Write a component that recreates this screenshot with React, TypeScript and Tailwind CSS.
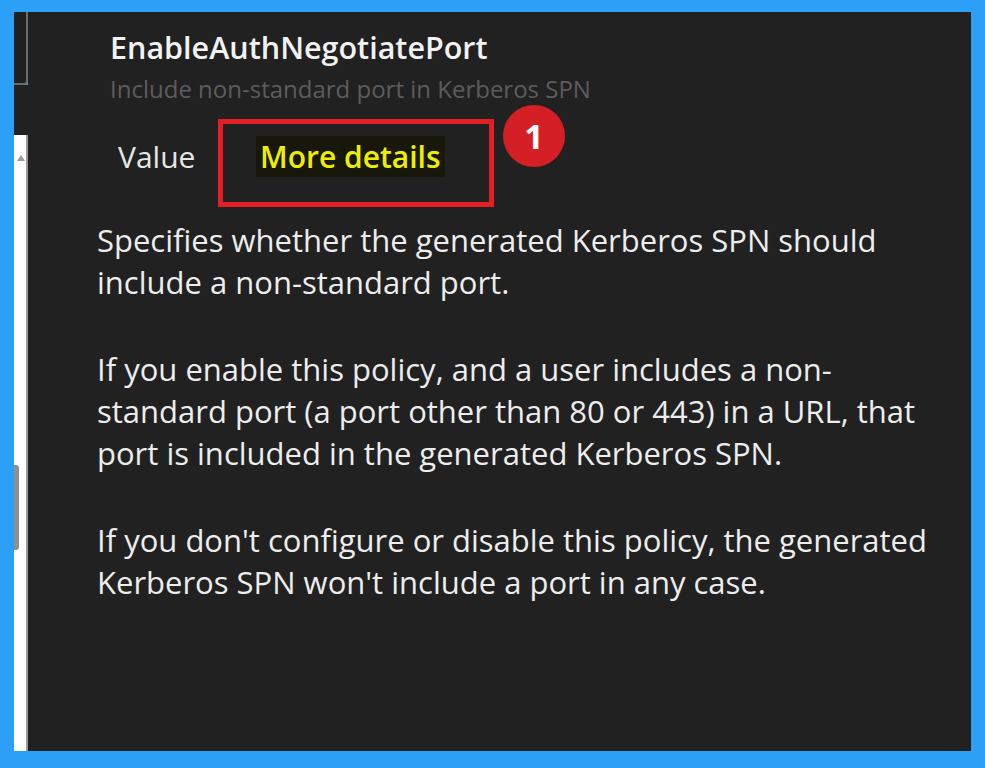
const body = [
  [
    "Specifies whether the generated Kerberos SPN should",
    "include a non-standard port.",
  ],
  [
    "If you enable this policy, and a user includes a non-",
    "standard port (a port other than 80 or 443) in a URL, that",
    "port is included in the generated Kerberos SPN.",
  ],
  [
    "If you don't configure or disable this policy, the generated",
    "Kerberos SPN won't include a port in any case.",
  ],
];

export default function App() {
  return (
    <div
      className="flex h-[768px] w-[985px] bg-[#2ba0f6] pb-[17px] pl-[14px] pr-[14px] pt-[12px]"
      style={{ fontFamily: '"Open Sans", "Noto Sans", sans-serif' }}
    >
      {/* left edge of the neighbouring pane */}
      <div className="flex w-[14px] flex-col">
        <div className="h-[73px] rounded-br-[4px] border-b-2 border-r-2 border-[#6b6b6b] bg-[#202020]" />
        <div className="h-[50px] bg-[#212121]" />
        <div className="relative flex-1 border-r-2 border-[#9a9a9a] bg-white">
          <div className="absolute left-[3px] top-[20px] h-0 w-0 border-b-[6px] border-l-[4px] border-r-[4px] border-b-[#9b9b9b] border-l-transparent border-r-transparent" />
          <div className="absolute left-0 top-[330px] h-[85px] w-[5px] rounded-r-[3px] bg-[#8f8f8f]" />
        </div>
      </div>

      <div className="flex-1 bg-[#212121] text-white">
        <div className="pl-[82px] pt-[15px]">
          <div className="text-[30.5px] font-semibold leading-[40px] text-[#f2f2f2]">
            EnableAuthNegotiatePort
          </div>
          <div className="mt-[7px] text-[24px] leading-[30px] text-[#5c5c5c]">
            Include non-standard port in Kerberos SPN
          </div>
        </div>

        <div className="mt-[15px] flex items-start pl-[90px]">
          <span className="mt-[18px] w-[100px] text-[30px] leading-[40px] text-[#e6e6e6]">
            Value
          </span>
          <div className="h-[88px] w-[276px] border-[5px] border-[#e31e25] pl-[33px] pt-[13px]">
            <span className="bg-[#17170a] px-[4px] text-[30px] font-semibold leading-[40px] text-[#eeee00]">
              More details
            </span>
          </div>
          <div className="-mt-[14px] ml-[9px] flex h-[62px] w-[62px] items-center justify-center rounded-full bg-[#d51f26] text-[34px] font-bold text-white">
            1
          </div>
        </div>

        <div className="mt-[12px] flex flex-col gap-[45px] pl-[69px]">
          {body.map((para, i) => (
            <p key={i} className="text-[31px] leading-[42px] text-[#ededed]">
              {para.map((line) => (
                <span key={line} className="block whitespace-nowrap">
                  {line}
                </span>
              ))}
            </p>
          ))}
        </div>
      </div>
    </div>
  );
}
